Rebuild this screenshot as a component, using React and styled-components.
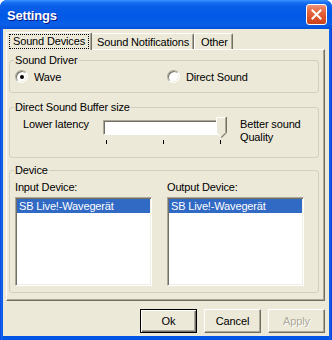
import React from "react";
import styled, { createGlobalStyle } from "styled-components";

const GlobalStyle = createGlobalStyle`
  html, body {
    margin: 0;
    padding: 0;
    background: #ffffff;
  }
  body {
    font-family: "Liberation Sans", Arial, sans-serif;
    font-size: 11px;
    letter-spacing: -0.15px;
    color: #000;
  }
`;

const Window = styled.div`
  width: 332px;
  height: 340px;
  display: flex;
  flex-direction: column;
  border-radius: 7px 7px 0 0;
  overflow: hidden;
  background: #0054e3;
`;

const TitleBar = styled.div`
  height: 29px;
  flex-shrink: 0;
  display: flex;
  align-items: center;
  justify-content: space-between;
  padding: 0 5px 0 7px;
  background: linear-gradient(
    to bottom,
    #3d95ff 0%,
    #1a72f5 8%,
    #0a5fe8 20%,
    #0058e6 55%,
    #0a5fe6 85%,
    #0450d8 100%
  );
`;

const Title = styled.span`
  font-family: "Liberation Sans", Arial, sans-serif;
  font-weight: 700;
  font-size: 13px;
  letter-spacing: -0.2px;
  color: #fff;
  text-shadow: 1px 1px 0 #0a1883;
  padding-top: 2px;
`;

const CloseButton = styled.div`
  width: 21px;
  height: 21px;
  box-sizing: border-box;
  border: 1px solid #fff;
  border-radius: 3px;
  display: flex;
  align-items: center;
  justify-content: center;
  background: linear-gradient(to bottom, #f0937a 0%, #e5673f 35%, #dc5128 70%, #c8431c 100%);
`;

const Frame = styled.div`
  flex: 1;
  display: flex;
  padding: 0 3px 4px;
  background: linear-gradient(to right, #0831d9 0, #166aee 1px, #0055e5 3px, #0055e5 329px, #166aee 330px, #0831d9 332px);
`;

const Client = styled.div`
  flex: 1;
  display: flex;
  flex-direction: column;
  background: #ece9d8;
  padding: 2px 4px 3px 3px;
`;

const TabRow = styled.div`
  display: flex;
  align-items: flex-end;
  height: 18px;
  position: relative;
  z-index: 1;
`;

const Tab = styled.div`
  height: ${(p) => (p.$active ? "18px" : "16px")};
  box-sizing: border-box;
  display: flex;
  align-items: center;
  padding: ${(p) => (p.$active ? "0 2px 1px" : "0 4px 0 6px")};
  margin-right: ${(p) => (p.$active ? "-2px" : "0")};
  margin-bottom: ${(p) => (p.$active ? "-1px" : "0")};
  position: relative;
  z-index: ${(p) => (p.$active ? 2 : 1)};
  background: #ece9d8;
  border-top: 1px solid #fff;
  border-left: 1px solid #fff;
  border-right: 1px solid #716f64;
  box-shadow: inset -1px 0 0 #aca899;
  border-radius: 2px 2px 0 0;
  white-space: nowrap;
`;

const FocusLabel = styled.span`
  border: 1px dotted #000;
  padding: 0 3px;
  line-height: 13px;
`;

const Panel = styled.div`
  flex: 1;
  display: flex;
  flex-direction: column;
  padding: 4px 5px 0 2px;
  border-top: 1px solid #fff;
  border-left: 1px solid #fff;
  border-right: 1px solid #716f64;
  border-bottom: 1px solid #716f64;
  box-shadow: inset -1px -1px 0 #aca899;
`;

const Group = styled.fieldset`
  margin: ${(p) => p.$top || 0}px 0 0;
  padding: ${(p) => p.$pad};
  border: 1px solid #d0d0bf;
  border-radius: 3px;
  min-width: 0;
`;

const Legend = styled.legend`
  padding: 0 1px;
  margin-left: 4px;
  line-height: 13px;
`;

const RadioGrid = styled.div`
  display: grid;
  grid-template-columns: 152px 1fr;
  padding-left: 5px;
`;

const RadioItem = styled.label`
  display: flex;
  align-items: center;
  gap: 6px;
  height: 13px;
`;

const RadioCircle = styled.span`
  width: 13px;
  height: 13px;
  box-sizing: border-box;
  border-radius: 50%;
  border: 1px solid;
  border-color: #aca899 #fff #fff #aca899;
  box-shadow: inset 1px 1px 0 #716f64, inset -1px -1px 0 #f1efe2;
  background: #fff;
  display: flex;
  align-items: center;
  justify-content: center;

  &::after {
    content: "";
    width: 4px;
    height: 4px;
    border-radius: 50%;
    background: ${(p) => (p.$checked ? "#000" : "transparent")};
  }
`;

const SliderRow = styled.div`
  display: flex;
  align-items: flex-start;
  padding-left: 13px;
`;

const SliderLabel = styled.span`
  width: 80px;
  line-height: 13px;
`;

const Slider = styled.div`
  width: 123px;
  position: relative;
  padding-top: 2px;
`;

const Track = styled.div`
  width: 120px;
  height: 15px;
  box-sizing: border-box;
  background: #fff;
  border-top: 1px solid #aca899;
  border-left: 1px solid #aca899;
  border-right: 1px solid #fff;
  border-bottom: 1px solid #fff;
  box-shadow: inset 1px 1px 0 #716f64;
`;

const Thumb = styled.svg`
  position: absolute;
  left: 113px;
  top: -1px;
`;

const Ticks = styled.div`
  display: flex;
  justify-content: space-between;
  width: 115px;
  padding-left: 3px;
  margin-top: 5px;
`;

const Tick = styled.span`
  width: 1px;
  height: 4px;
  background: #000;
`;

const SliderNote = styled.span`
  margin-left: 14px;
  line-height: 13px;
`;

const DeviceGrid = styled.div`
  display: grid;
  grid-template-columns: 137px 137px;
  column-gap: 15px;
  padding-left: 5px;
`;

const DeviceColumn = styled.div`
  display: flex;
  flex-direction: column;
`;

const DeviceLabel = styled.span`
  line-height: 13px;
  margin-bottom: 3px;
`;

const ListBox = styled.div`
  height: 89px;
  box-sizing: border-box;
  background: #fff;
  padding: 1px;
  border-top: 1px solid #aca899;
  border-left: 1px solid #aca899;
  border-right: 1px solid #fff;
  border-bottom: 1px solid #fff;
  box-shadow: inset 1px 1px 0 #716f64, inset -1px -1px 0 #f1efe2;
`;

const ListItem = styled.div`
  height: 14px;
  line-height: 14px;
  padding-left: 2px;
  background: ${(p) => (p.$selected ? "#316ac5" : "transparent")};
  color: ${(p) => (p.$selected ? "#fff" : "#000")};
  white-space: nowrap;
`;

const ButtonRow = styled.div`
  display: flex;
  justify-content: flex-end;
  gap: 7px;
  margin-top: 8px;
`;

const Button = styled.button`
  width: 57px;
  height: 24px;
  box-sizing: border-box;
  font-family: "Liberation Sans", Arial, sans-serif;
  font-size: 11px;
  letter-spacing: -0.15px;
  background: #ece9d8;
  color: ${(p) => (p.disabled ? "#aca899" : "#000")};
  text-shadow: ${(p) => (p.disabled ? "1px 1px 0 #fff" : "none")};
  padding: 0;
  border: 1px solid;
  border-color: ${(p) => (p.$default ? "#000" : "#fff #716f64 #716f64 #fff")};
  box-shadow: ${(p) =>
    p.$default
      ? "inset 1px 1px 0 #fff, inset -1px -1px 0 #716f64, inset -2px -2px 0 #aca899"
      : "inset -1px -1px 0 #aca899"};
`;

const devices = ["SB Live!-Wavegerät"];

export default function App() {
  return (
    <>
      <GlobalStyle />
      <Window>
        <TitleBar>
          <Title>Settings</Title>
          <CloseButton>
            <svg width="11" height="11" viewBox="0 0 11 11">
              <path d="M1.5 1.5 L9.5 9.5 M9.5 1.5 L1.5 9.5" stroke="#fff" strokeWidth="2" strokeLinecap="square" />
            </svg>
          </CloseButton>
        </TitleBar>
        <Frame>
          <Client>
            <TabRow>
              <Tab $active>
                <FocusLabel>Sound Devices</FocusLabel>
              </Tab>
              <Tab>Sound Notifications</Tab>
              <Tab>Other</Tab>
            </TabRow>
            <Panel>
              <Group $pad="3px 0 9px">
                <Legend>Sound Driver</Legend>
                <RadioGrid>
                  <RadioItem>
                    <RadioCircle $checked />
                    Wave
                  </RadioItem>
                  <RadioItem>
                    <RadioCircle />
                    Direct Sound
                  </RadioItem>
                </RadioGrid>
              </Group>

              <Group $top={8} $pad="4px 0 13px">
                <Legend>Direct Sound Buffer size</Legend>
                <SliderRow>
                  <SliderLabel>Lower latency</SliderLabel>
                  <Slider>
                    <Track />
                    <Thumb width="11" height="21" viewBox="0 0 11 21">
                      <path d="M0.5 0.5 H9.5 V15.5 L5 20 L0.5 15.5 Z" fill="#ece9d8" />
                      <path d="M0.5 15.5 V0.5 H9.5" stroke="#fff" fill="none" />
                      <path d="M9.5 0.5 V15.5 L5 20" stroke="#aca899" fill="none" />
                      <path d="M10.5 0 V15.8 L5.2 21" stroke="#716f64" fill="none" />
                      <path d="M0.5 15.5 L4.5 19.5" stroke="#fff" fill="none" />
                    </Thumb>
                    <Ticks>
                      <Tick />
                      <Tick />
                      <Tick />
                    </Ticks>
                  </Slider>
                  <SliderNote>
                    Better sound
                    <br />
                    Quality
                  </SliderNote>
                </SliderRow>
              </Group>

              <Group $top={6} $pad="4px 0 6px">
                <Legend>Device</Legend>
                <DeviceGrid>
                  <DeviceColumn>
                    <DeviceLabel>Input Device:</DeviceLabel>
                    <ListBox>
                      {devices.map((d) => (
                        <ListItem key={d} $selected>
                          {d}
                        </ListItem>
                      ))}
                    </ListBox>
                  </DeviceColumn>
                  <DeviceColumn>
                    <DeviceLabel>Output Device:</DeviceLabel>
                    <ListBox>
                      {devices.map((d) => (
                        <ListItem key={d} $selected>
                          {d}
                        </ListItem>
                      ))}
                    </ListBox>
                  </DeviceColumn>
                </DeviceGrid>
              </Group>
            </Panel>
            <ButtonRow>
              <Button $default>Ok</Button>
              <Button>Cancel</Button>
              <Button disabled>Apply</Button>
            </ButtonRow>
          </Client>
        </Frame>
      </Window>
    </>
  );
}
